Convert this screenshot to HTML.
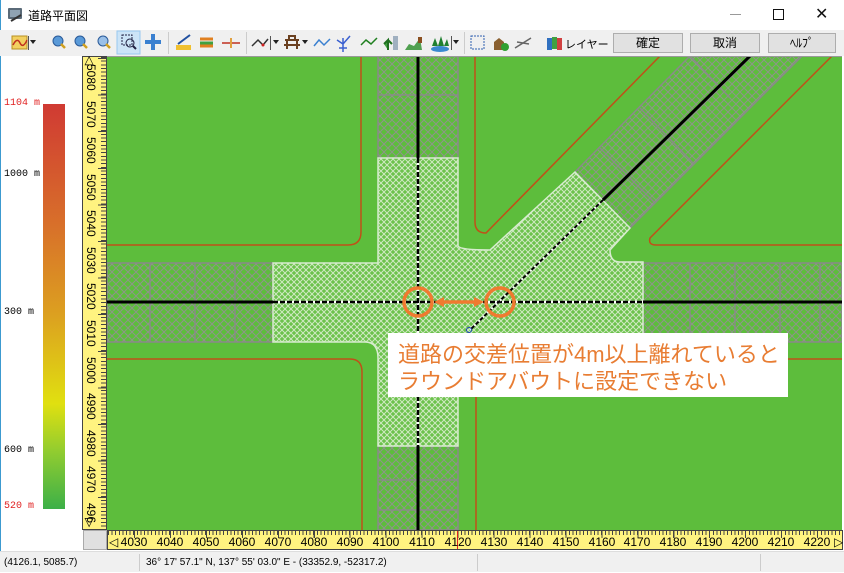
<!DOCTYPE html>
<html><head><meta charset="utf-8"><style>
*{margin:0;padding:0;box-sizing:border-box}
body{width:844px;height:572px;position:relative;background:#fff;font-family:"Liberation Sans","Noto Sans CJK JP",sans-serif;overflow:hidden}
.abs{position:absolute}
.tb{top:30px;height:26px;left:0;width:844px;background:#f0f0f0}
.btn{position:absolute;top:33px;height:20px;background:#e1e1e1;border:1px solid #adadad;font-size:12px;text-align:center;line-height:18px;color:#000}
.lab{position:absolute;font-size:10px;font-family:"Liberation Mono",monospace;left:4px}
</style></head><body>
<div class="abs" style="left:0;top:0;width:1px;height:572px;background:#3c9ad0"></div>
<svg class="abs" style="left:7px;top:7px" width="17" height="16"><rect x="1" y="1" width="14" height="11" rx="1" fill="#5a6a78"/><rect x="3" y="3" width="10" height="7" fill="#8fa3b3"/><path d="M4 14 L14 8" stroke="#333" stroke-width="2"/></svg>
<div class="abs" style="left:28px;top:7px;font-size:12px">道路平面図</div>
<div class="abs" style="left:730px;top:14px;width:11px;height:1px;background:#999"></div>
<div class="abs" style="left:773px;top:9px;width:11px;height:11px;border:1px solid #111"></div>
<div class="abs" style="left:815px;top:4px;font-size:16px;color:#111">✕</div>
<div class="abs tb"></div>
<svg class="abs" style="left:0;top:30px" width="600" height="26">
<rect x="12" y="6" width="15" height="13" fill="#f2d060" stroke="#b89020"/><path d="M13 15 Q17 7 20 13 T27 10" stroke="#c03020" fill="none" stroke-width="1.5"/><path d="M30 10 L36 10 L33 14Z" fill="#222"/><rect x="28" y="6" width="1" height="14" fill="#555"/>
<circle cx="58" cy="11" r="5" fill="#5a9ad8" stroke="#2a5a98"/><path d="M61 14 L65 18" stroke="#d0a020" stroke-width="2.5"/>
<circle cx="80" cy="11" r="5" fill="#5a9ad8" stroke="#2a5a98"/><path d="M83 14 L87 18" stroke="#d0a020" stroke-width="2.5"/>
<circle cx="103" cy="11" r="5" fill="#9ac0e8" stroke="#2a5a98"/><path d="M106 14 L110 18" stroke="#d0a020" stroke-width="2.5"/>
<rect x="117" y="1" width="23" height="23" fill="#cce4f7" stroke="#99c9ef"/><rect x="122" y="5" width="10" height="10" fill="none" stroke="#224" stroke-dasharray="2 1"/><circle cx="130" cy="13" r="4" fill="none" stroke="#224"/><path d="M133 16 L136 19" stroke="#224" stroke-width="2"/>
<path d="M153 4 L153 20 M145 12 L161 12" stroke="#3a80d0" stroke-width="4"/>
<rect x="168" y="2" width="1" height="22" fill="#ccc"/>
<rect x="176" y="15" width="15" height="5" fill="#f0c030"/><path d="M178 14 L190 5" stroke="#2050a0" stroke-width="2"/>
<path d="M200 9 L213 9 M200 16 L213 16" stroke="#e08020" stroke-width="3"/><path d="M200 13 L213 13" stroke="#40a040" stroke-width="3"/>
<path d="M222 13 L240 13" stroke="#c03020" stroke-width="1.5"/><path d="M231 8 L231 18" stroke="#e0a040" stroke-width="2"/>
<rect x="246" y="2" width="1" height="22" fill="#ccc"/>
<path d="M252 16 L258 10 L263 15 L268 9" stroke="#333" fill="none" stroke-width="1.5"/><circle cx="263" cy="15" r="1.5" fill="#d02020"/><rect x="270" y="6" width="1" height="14" fill="#555"/><path d="M273 10 L279 10 L276 14Z" fill="#222"/>
<path d="M285 10 L299 10 M287 10 L287 19 M297 10 L297 19 M284 15 L300 15 M289 6 L295 6 L295 10 L289 10Z" stroke="#6a4020" fill="none" stroke-width="2"/><path d="M302 10 L308 10 L305 14Z" fill="#222"/>
<path d="M314 16 L319 10 L324 15 L330 9" stroke="#3a80d0" fill="none" stroke-width="1.5"/>
<path d="M337 10 L343 14 L350 6 M343 8 L343 22 M339 18 L347 18" stroke="#3a60d0" fill="none" stroke-width="1.5"/>
<path d="M361 15 L366 10 L371 14 L377 8" stroke="#208020" fill="none" stroke-width="1.5"/>
<path d="M388 20 L388 10 L384 14 M388 10 L392 14" stroke="#207020" fill="#40a040" stroke-width="2"/><rect x="393" y="6" width="5" height="14" fill="#a0b0c0"/>
<path d="M405 20 L409 14 L414 16 L420 8 L422 20Z" fill="#50a050"/><rect x="418" y="7" width="4" height="6" fill="#8a5020"/>
<ellipse cx="440" cy="19" rx="9" ry="3" fill="#3a8ad0"/><path d="M432 16 L435 8 L438 16 M438 16 L441 6 L444 16 M444 16 L447 9 L449 16" fill="#208030"/><rect x="451" y="6" width="1" height="14" fill="#555"/><path d="M453 10 L459 10 L456 14Z" fill="#222"/>
<rect x="464" y="2" width="1" height="22" fill="#ccc"/>
<rect x="471" y="6" width="13" height="13" fill="none" stroke="#3060b0" stroke-dasharray="2 1"/>
<path d="M494 20 L494 12 L499 8 L504 12 L504 20Z" fill="#8a6030"/><circle cx="505" cy="17" r="4" fill="#30a030"/>
<path d="M515 18 L531 8 M517 12 L529 14" stroke="#666" stroke-width="1.5"/>
<rect x="547" y="8" width="5" height="12" fill="#3070c0"/><rect x="552" y="7" width="5" height="12" fill="#40a040"/><rect x="557" y="8" width="5" height="12" fill="#d04040"/>
<rect x="604" y="2" width="1" height="22" fill="#ccc"/>
</svg>
<div class="abs" style="left:565px;top:36px;font-size:11px">レイヤー</div>
<div class="btn" style="left:613px;width:70px">確定</div>
<div class="btn" style="left:690px;width:70px">取消</div>
<div class="btn" style="left:768px;width:68px">ﾍﾙﾌﾟ</div>
<div class="abs" style="left:43px;top:104px;width:22px;height:405px;background:linear-gradient(#d03a33 0%,#d8702a 30%,#dca020 52%,#e0e010 74%,#90cc30 86%,#3cb048 100%)"></div>
<div class="lab" style="top:98px;color:#e02020">1104 m</div>
<div class="lab" style="top:169px">1000 m</div>
<div class="lab" style="top:307px">300 m</div>
<div class="lab" style="top:445px">600 m</div>
<div class="lab" style="top:501px;color:#e02020">520 m</div>
<div class="abs" style="left:82px;top:56px;width:25px;height:474px;background:#fff380;border:1px solid #444;overflow:hidden">
<div class="abs" style="right:0;top:0;width:5px;height:474px;background:repeating-linear-gradient(#444 0 1px,transparent 1px 3.66px)"></div>
<div class="abs" style="right:0;top:1px;width:8px;height:474px;background:repeating-linear-gradient(#444 0 1px,transparent 1px 36.6px)"></div>
</div>
<svg class="abs" style="left:82px;top:56px" width="25" height="474" font-size="12" font-family="Liberation Sans">
<text transform="translate(4,0) rotate(90)">◁</text>
<text transform="translate(5,8) rotate(90)">5080</text><text transform="translate(5,45) rotate(90)">5070</text><text transform="translate(5,81) rotate(90)">5060</text><text transform="translate(5,118) rotate(90)">5050</text><text transform="translate(5,154) rotate(90)">5040</text><text transform="translate(5,191) rotate(90)">5030</text><text transform="translate(5,227) rotate(90)">5020</text><text transform="translate(5,264) rotate(90)">5010</text><text transform="translate(5,301) rotate(90)">5000</text><text transform="translate(5,337) rotate(90)">4990</text><text transform="translate(5,374) rotate(90)">4980</text><text transform="translate(5,410) rotate(90)">4970</text><text transform="translate(5,447) rotate(90)">496</text>
<text transform="translate(4,462) rotate(90)">▷</text>
</svg>
<svg class="abs" style="left:107px;top:56px" width="735" height="474" viewBox="107 56 735 474">
<defs>
<pattern id="dk" patternUnits="userSpaceOnUse" width="8" height="8"><rect width="8" height="8" fill="#5dbd3c"/><path d="M0 0L8 8M8 0L0 8" stroke="#8e948a" stroke-width="1"/></pattern>
<pattern id="lt" patternUnits="userSpaceOnUse" width="6" height="6"><rect width="6" height="6" fill="#6cc24c"/><path d="M0 0L6 6M6 0L0 6" stroke="#cfe9c2" stroke-width="1"/></pattern>
</defs>
<rect x="107" y="56" width="735" height="474" fill="#5dbd3c"/>
<g stroke="#8a8a8a" stroke-width="1.5">
<rect x="378" y="56" width="80" height="102" fill="url(#dk)"/>
<rect x="378" y="446" width="80" height="84" fill="url(#dk)"/>
<rect x="107" y="263" width="166" height="79" fill="url(#dk)"/>
<rect x="643" y="263" width="199" height="79" fill="url(#dk)"/>
<polygon points="575,172 630,228 802,56 690,56" fill="url(#dk)"/>
<path d="M150 263V342M195 263V342M235 263V342M690 263V342M735 263V342M780 263V342M820 263V342M378 95H458M378 480H458M378 510H458M600 148L655 203M640 108L693 163M690 56L730 98" fill="none"/>
</g>
<path d="M378 158H458V246Q460 250 490 250L575 172L630 228L610 250Q610 262 620 262H643V342H458V446H378V358Q378 342 365 342H273V263H378Z" fill="url(#lt)" stroke="#d8ecd0" stroke-width="1.5"/>
<g stroke="#c05018" stroke-width="1.5" fill="none">
<path d="M107 245H348Q361 245 361 232V56"/>
<path d="M475 56V222Q475 233 486 233L660 56"/>
<path d="M832 56L650 238Q648 245 656 245H842"/>
<path d="M107 359H350Q362 359 362 372V530"/>
<path d="M476 530V372Q476 359 490 359H842"/>
</g>
<g stroke="#000" stroke-width="3">
<path d="M418 56V158M418 446V530M107 302H273M643 302H842M603 200L750 56"/>
</g>
<g stroke-width="2.5">
<path d="M418 158V446M273 302H643" stroke="#fff"/>
<path d="M418 158V446M273 302H643" stroke="#000" stroke-dasharray="5 2"/>
<path d="M603 200L470 330" stroke="#fff" stroke-width="2"/>
<path d="M603 200L470 330" stroke="#000" stroke-width="2" stroke-dasharray="4 2"/>
</g>
<circle cx="469" cy="330" r="2.5" fill="none" stroke="#2040c0"/>
<g stroke="#f07a30" stroke-width="3.5" fill="none">
<circle cx="418" cy="302" r="14"/><circle cx="500" cy="302" r="14"/>
<path d="M440 302H478"/>
</g>
<path d="M434 302L444 297L444 307Z M484 302L474 297L474 307Z" fill="#f07a30"/>
<rect x="388" y="333" width="400" height="64" fill="#fff"/>
<text x="398" y="362" font-size="22" fill="#e87d33" font-family="Liberation Sans,Noto Sans CJK JP,sans-serif">道路の交差位置が4m以上離れていると</text>
<text x="398" y="389" font-size="22" fill="#e87d33" font-family="Liberation Sans,Noto Sans CJK JP,sans-serif">ラウンドアバウトに設定できない</text>
</svg>
<div class="abs" style="left:107px;top:56px;width:735px;height:1px;background:#999"></div>
<div class="abs" style="left:83px;top:530px;width:24px;height:20px;background:#e0e0e0;border:1px solid #aaa"></div>
<div class="abs" style="left:107px;top:530px;width:736px;height:20px;background:#fff380;border:1px solid #444;overflow:hidden">
<div class="abs" style="left:0;top:0;width:736px;height:4px;background:repeating-linear-gradient(90deg,#444 0 1px,transparent 1px 3.6px)"></div>
<div class="abs" style="left:26px;top:0;width:736px;height:7px;background:repeating-linear-gradient(90deg,#444 0 1px,transparent 1px 35.95px)"></div>
<div class="abs" style="left:349px;top:0;width:1px;height:20px;background:#e02020"></div>
</div>
<svg class="abs" style="left:107px;top:530px" width="736" height="20" font-size="12" font-family="Liberation Sans">
<text x="2" y="16">◁</text>
<g text-anchor="middle">
<text x="27" y="16">4030</text><text x="63" y="16">4040</text><text x="99" y="16">4050</text><text x="135" y="16">4060</text><text x="171" y="16">4070</text><text x="207" y="16">4080</text><text x="243" y="16">4090</text><text x="279" y="16">4100</text><text x="315" y="16">4110</text><text x="351" y="16">4120</text><text x="387" y="16">4130</text><text x="423" y="16">4140</text><text x="459" y="16">4150</text><text x="495" y="16">4160</text><text x="530" y="16">4170</text><text x="566" y="16">4180</text><text x="602" y="16">4190</text><text x="638" y="16">4200</text><text x="674" y="16">4210</text><text x="710" y="16">4220</text>
</g>
<text x="727" y="16">▷</text>
</svg>
<div class="abs" style="left:0;top:551px;width:844px;height:21px;background:#f0f0f0;border-top:1px solid #ddd;font-size:10px;line-height:21px">
<span class="abs" style="left:4px">(4126.1, 5085.7)</span>
<span class="abs" style="left:139px;top:2px;width:1px;height:17px;background:#ccc"></span>
<span class="abs" style="left:146px">36° 17' 57.1" N, 137° 55' 03.0" E - (33352.9, -52317.2)</span>
<span class="abs" style="left:477px;top:2px;width:1px;height:17px;background:#ccc"></span>
<span class="abs" style="left:760px;top:2px;width:1px;height:17px;background:#ccc"></span>
</div>
</body></html>
